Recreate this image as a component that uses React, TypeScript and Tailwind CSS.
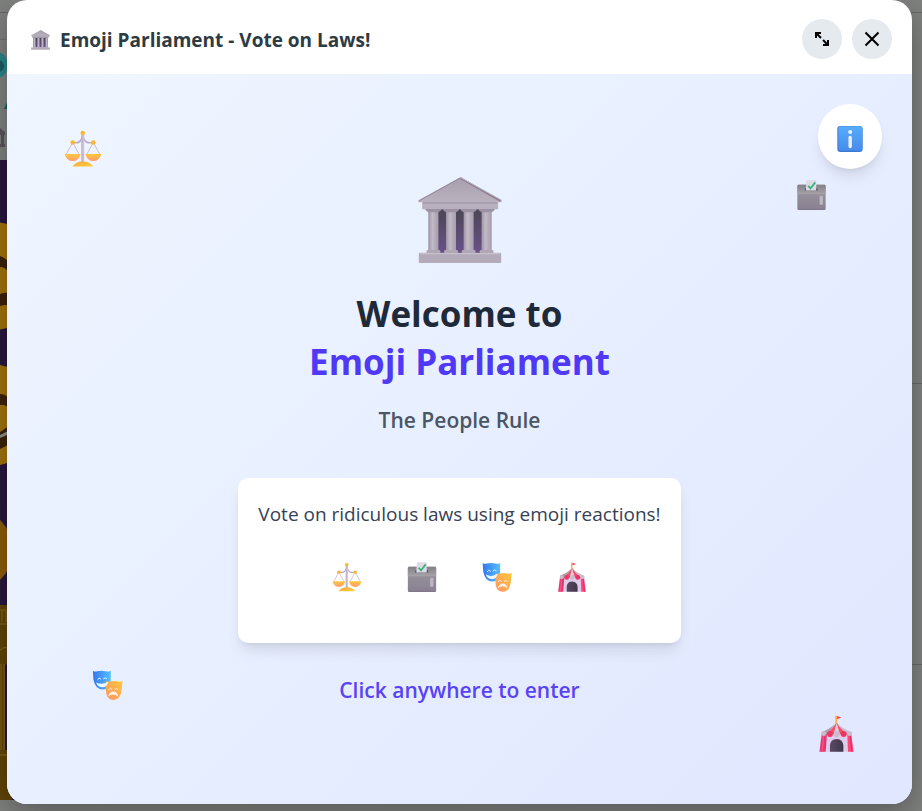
import React from "react";

type IconProps = { className: string };

function Gradients() {
  return (
    <svg className="absolute h-0 w-0" aria-hidden="true">
      <defs>
        <linearGradient id="stone" x1="0" y1="0" x2="0" y2="1">
          <stop offset="0" stopColor="#a79fac" />
          <stop offset="1" stopColor="#b9b1bd" />
        </linearGradient>
        <linearGradient id="column" x1="0" y1="0" x2="1" y2="0">
          <stop offset="0" stopColor="#9f95a6" />
          <stop offset="0.4" stopColor="#c2bac7" />
          <stop offset="1" stopColor="#a79dad" />
        </linearGradient>
        <linearGradient id="hall" x1="0" y1="0" x2="0" y2="1">
          <stop offset="0" stopColor="#4b4653" />
          <stop offset="1" stopColor="#68518a" />
        </linearGradient>
        <linearGradient id="pan" x1="0" y1="0" x2="0" y2="1">
          <stop offset="0" stopColor="#ffc83a" />
          <stop offset="1" stopColor="#ff9a72" />
        </linearGradient>
        <linearGradient id="gold" x1="0" y1="0" x2="1" y2="1">
          <stop offset="0" stopColor="#f5a53c" />
          <stop offset="1" stopColor="#ffd03a" />
        </linearGradient>
        <linearGradient id="boxFront" x1="0" y1="0" x2="0" y2="1">
          <stop offset="0" stopColor="#9b989f" />
          <stop offset="1" stopColor="#898091" />
        </linearGradient>
        <linearGradient id="boxTop" x1="0" y1="0" x2="0" y2="1">
          <stop offset="0" stopColor="#828086" />
          <stop offset="1" stopColor="#a3a1a5" />
        </linearGradient>
        <linearGradient id="happy" x1="0" y1="0" x2="1" y2="0">
          <stop offset="0" stopColor="#3577ee" />
          <stop offset="1" stopColor="#55c0ff" />
        </linearGradient>
        <linearGradient id="sad" x1="0" y1="1" x2="1" y2="0">
          <stop offset="0" stopColor="#ff9463" />
          <stop offset="1" stopColor="#ffc63a" />
        </linearGradient>
        <linearGradient id="door" x1="0" y1="0" x2="1" y2="0">
          <stop offset="0" stopColor="#594a67" />
          <stop offset="1" stopColor="#403749" />
        </linearGradient>
        <linearGradient id="info" x1="0" y1="0" x2="0" y2="1">
          <stop offset="0" stopColor="#57acfa" />
          <stop offset="1" stopColor="#468cec" />
        </linearGradient>
      </defs>
    </svg>
  );
}

function Parliament({ className }: IconProps) {
  return (
    <svg className={className} viewBox="52 36 252 259" aria-hidden="true">
      <rect x="84" y="130" width="188" height="136" fill="url(#hall)" />
      <path d="M180 37 L303 106 V112 H53 V106 Z" fill="url(#stone)" />
      <path d="M180 40 L300 108" stroke="#8b7c91" strokeWidth="5" />
      <path d="M178 37 L303 106" stroke="#b9b1bd" strokeWidth="3" />
      <path d="M178 39 L54 108" stroke="#928898" strokeWidth="3" />
      <rect x="64" y="112" width="229" height="21" rx="2" fill="#b9b0bf" />
      <path d="M66 114 H291" stroke="#988e9f" strokeWidth="3" />
      {[98, 151, 204, 258].map((x) => (
        <g key={x}>
          <rect x={x - 15} y="136" width="30" height="125" fill="url(#column)" />
          <path d={`M${x - 25} 132 H${x + 25} Q${x + 23} 140 ${x + 14} 142 H${x - 14} Q${x - 23} 140 ${x - 25} 132`} fill="#9c92a3" />
          <rect x={x - 21} y="256" width="42" height="10" rx="4" fill="#b0a7b6" />
        </g>
      ))}
      <rect x="54" y="264" width="248" height="31" rx="3" fill="#b3abb9" />
      <path d="M58 267 H300" stroke="#c7c0cb" strokeWidth="4" />
    </svg>
  );
}

function Scales({ className }: IconProps) {
  return (
    <svg className={className} viewBox="40 28 118 114" aria-hidden="true">
      <g fill="none" stroke="#c9b8d0" strokeWidth="3">
        <path d="M67 66 L47 103 M67 66 L87 103 M131 66 L111 103 M131 66 L151 103" />
        <path d="M67 67 H78 Q93 67 98 46 Q104 67 119 67 H131" stroke="#bcaac5" strokeWidth="5" />
        <path d="M98 42 V130" stroke="#c4b4cc" strokeWidth="9" />
        <path d="M101 46 V128" stroke="#dccfe1" strokeWidth="2" />
      </g>
      <path d="M42 102 H92 Q86 124 67 124 Q48 124 42 102 M106 102 H156 Q150 124 131 124 Q112 124 106 102" fill="url(#pan)" />
      <path d="M66 141 Q76 125 98 125 Q121 125 131 141 Z" fill="url(#gold)" />
      <g fill="#fcb62f">
        <circle cx="98" cy="37" r="7" />
        <circle cx="67" cy="66" r="7" />
        <circle cx="131" cy="66" r="7" />
      </g>
    </svg>
  );
}

function BallotBox({ className }: IconProps) {
  return (
    <svg className={className} viewBox="50 542 86 89" aria-hidden="true">
      <rect x="51" y="556" width="84" height="75" rx="4" fill="url(#boxFront)" />
      <path d="M55 556 H131 Q135 556 135 560 V583 H51 V560 Q51 556 55 556" fill="url(#boxTop)" />
      <path d="M51 583 H135" stroke="#aaa6ad" strokeWidth="2" />
      <path d="M75 566 H109 L112 573 H72 Z" fill="#504658" />
      <path d="M78 543 H107 V573 H76 Z" fill="#ded8e7" />
      <path d="M83 559 L90 567 L104 549" fill="none" stroke="#2db578" strokeWidth="5" />
      <rect x="117" y="589" width="10" height="27" rx="4" fill="#bbb6c1" />
      <path d="M53 629 H133" stroke="#7d7089" strokeWidth="2" />
    </svg>
  );
}

function Masks({ className }: IconProps) {
  return (
    <svg className={className} viewBox="754 290 94 92" aria-hidden="true">
      <path d="M756 292 Q762 296 769 294 Q782 290 796 294 Q804 296 811 292 V315 Q811 350 787 350 Q764 350 758 320 Z" fill="url(#happy)" />
      <path d="M796 324 Q803 328 811 325 Q823 322 834 325 Q841 327 847 323 L844 354 Q840 382 818 382 Q796 382 796 350 Z" fill="url(#sad)" />
      <path d="M766 328 Q784 338 803 326 Q800 343 785 343 Q771 342 766 328" fill="#f1f7ff" />
      <g fill="none" stroke="#eaf4ff" strokeWidth="3">
        <path d="M770 320 Q775 311 781 318 M788 318 Q794 310 799 317" />
        <path d="M804 351 Q810 342 815 350 M823 350 Q829 343 834 351" />
      </g>
      <path d="M803 371 Q807 356 820 356 Q832 357 834 372 Q819 359 803 371" fill="#fff1e6" />
    </svg>
  );
}

function Tent({ className }: IconProps) {
  return (
    <svg className={className} viewBox="56 44 106 113" aria-hidden="true">
      <path d="M64 101 L57 156 H161 L154 101 Z" fill="#dfcceb" />
      <path d="M64 101 H80 L76 156 H57 Z" fill="#df3970" />
      <path d="M142 101 H154 L161 156 H144 Z" fill="#ff4678" />
      <path d="M70 102 L65 156" stroke="#ff4c83" strokeWidth="5" />
      <path d="M151 103 L156 156" stroke="#e0265d" strokeWidth="3" />
      <path d="M109 65 Q99 82 64 96 V102 H155 V96 Q120 82 109 65" fill="#c9bfd0" />
      <path d="M109 67 Q100 85 80 99 L79 103 H101 L109 67 M109 67 L119 103 H143 Q121 88 109 67" fill="#fb4b66" />
      <path d="M64 96 Q88 88 106 71 L79 103 H64 Z" fill="#aaa0ad" />
      <path d="M101 101 L109 70 L119 101 Z" fill="#dacddd" />
      <g fill="#c9bdcd">
        <circle cx="70" cy="101" r="7" />
        <circle cx="110" cy="102" r="9" />
        <circle cx="149" cy="101" r="7" />
      </g>
      <g fill="#ed3563">
        <circle cx="89" cy="102" r="9" />
        <circle cx="131" cy="102" r="9" />
      </g>
      <path d="M89 156 V136 Q91 117 110 117 Q128 118 130 137 V156 Z" fill="url(#door)" />
      <path d="M108 46 V71" stroke="#ffac35" strokeWidth="5" />
      <path d="M111 47 L124 52 L111 57 Z" fill="#ff386c" />
    </svg>
  );
}

function InfoIcon({ className }: IconProps) {
  return (
    <svg className={className} viewBox="0 0 75 77" aria-hidden="true">
      <rect width="75" height="77" rx="9" fill="#3c78cd" />
      <rect x="3" y="1" width="71" height="72" rx="8" fill="url(#info)" />
      <circle cx="38" cy="18" r="6" fill="#f1eefc" />
      <rect x="33" y="29" width="10" height="37" rx="5" fill="#f1eefc" />
    </svg>
  );
}

function PageBehind() {
  return (
    <div className="absolute inset-0 overflow-hidden bg-[#7f817f]" aria-hidden="true">
      <div className="absolute inset-x-0 top-3 h-px bg-[#666866]" />
      <div className="absolute right-0 top-[383px] h-px w-5 bg-[#666866]" />
      <div className="absolute right-0 top-[664px] h-px w-5 bg-[#666866]" />
      <svg className="absolute left-0 top-0" width="30" height="811" viewBox="0 0 30 811">
        <path d="M0 39.5 H30" stroke="#717371" />
        <circle cx="-6" cy="65" r="14" fill="#2a8588" />
        <circle cx="-2" cy="66" r="6" fill="#1c5a60" />
        <path d="M4 109 L8 100 V109 Z" fill="#0f6652" />
        <path d="M0 128 L5 132 V135 H0 M1 135 H4 V145 H1 M0 144 H5 V147 H0" fill="#59545e" />
        <rect y="160" width="30" height="640" fill="#28173f" />
        <circle cx="-8" cy="276" r="54" fill="#a1730d" />
        <path d="M0 256 Q7 258 12 267 V276 Q5 266 0 267 M0 294 Q7 291 12 295 V306 Q5 304 0 306" fill="#3b220b" />
        <circle cx="-10" cy="415" r="51" fill="#a1730d" />
        <path d="M0 394 Q8 394 12 403 V410 Q5 404 0 405 M0 432 L12 424 V443 L0 449" fill="#3b220b" />
        <path d="M0 435 L12 429 V433 L0 438" fill="#8f8c83" />
        <circle cx="-28" cy="550" r="41" fill="#8b5d09" />
        <path d="M0 605 H12 V659 L5 665 V750 H12 V800 H0" fill="#604409" />
        <path d="M0 610 H12 M0 624 H12 M0 650 Q6 644 12 652 M0 755 H12 M2 611 V622 M6 611 V622 M1 664 V750 M4 664 V750" stroke="#8b681c" fill="none" />
      </svg>
    </div>
  );
}

const reactions = [
  { label: "Justice", Icon: Scales },
  { label: "Ballot", Icon: BallotBox },
  { label: "Drama", Icon: Masks },
  { label: "Circus", Icon: Tent },
];

export default function App() {
  return (
    <div className="relative flex min-h-screen flex-col pb-[7px] pl-[7px] pr-[10px] font-['Open_Sans','Noto_Sans',sans-serif]">
      <Gradients />
      <PageBehind />
      <main className="relative flex grow flex-col overflow-hidden rounded-[20px] bg-white shadow-[0_10px_30px_rgba(0,0,0,0.3)]">
        <header className="flex items-center justify-between pb-[15px] pl-6 pr-5 pt-[19px]">
          <div className="flex items-center gap-[10px] pt-[2px]">
            <Parliament className="h-5 w-[19px]" />
            <h2 className="text-[19px] font-bold leading-7 text-[#2d3b42]">Emoji Parliament - Vote on Laws!</h2>
          </div>
          <div className="flex gap-[10px]">
            <button type="button" aria-label="Expand" className="flex size-10 items-center justify-center rounded-full bg-[#e5eaee]">
              <svg className="size-4" viewBox="0 0 16 16" fill="none" stroke="#000" strokeWidth="2">
                <path d="M2 7 V2 H7 M2 2 L7 7 M14 9 V14 H9 M14 14 L9 9" />
              </svg>
            </button>
            <button type="button" aria-label="Close" className="flex size-10 items-center justify-center rounded-full bg-[#e5eaee]">
              <svg className="size-4" viewBox="0 0 16 16" fill="none" stroke="#000" strokeWidth="2">
                <path d="M1.5 1.5 L14.5 14.5 M14.5 1.5 L1.5 14.5" />
              </svg>
            </button>
          </div>
        </header>

        <section className="relative flex grow flex-col items-center justify-center bg-linear-135 from-[#eff6ff] to-[#e0e7ff] text-center">
          <Scales className="absolute left-[57px] top-14 h-[37px] w-[38px]" />
          <BallotBox className="absolute right-[86px] top-[106px] h-[30px] w-[29px]" />
          <Masks className="absolute bottom-[104px] left-[85px] h-[30px] w-[31px]" />
          <Tent className="absolute bottom-[52px] right-[58px] h-[37px] w-[35px]" />
          <button type="button" aria-label="Information" className="absolute right-[30px] top-[30px] flex h-[65px] w-16 items-center justify-center rounded-full bg-white shadow-lg">
            <InfoIcon className="mt-1 size-[26px]" />
          </button>

          <div className="flex h-24 items-center">
            <Parliament className="h-[86px] w-[84px]" />
          </div>
          <h1 className="mt-[22px] text-[35px] font-bold leading-[48px] text-[#1e2939]">
            Welcome to
            <span className="block text-[#4f39f6]">Emoji Parliament</span>
          </h1>
          <p className="mt-[18px] text-[21px] font-semibold leading-8 text-[#4a5565]">The People Rule</p>
          <div className="mt-[42px] rounded-[10px] bg-white px-5 pb-[46px] pt-5 shadow-[0_10px_15px_-3px_rgba(0,0,0,0.1),0_4px_6px_-4px_rgba(0,0,0,0.1)]">
            <p className="text-[19px] leading-8 text-[#364153]">Vote on ridiculous laws using emoji reactions!</p>
            <ul className="mt-[27px] flex h-10 items-center justify-center gap-[45px]">
              {reactions.map(({ label, Icon }) => (
                <li key={label} aria-label={label}>
                  <Icon className="size-[30px]" />
                </li>
              ))}
            </ul>
          </div>
          <button type="button" className="mt-[31px] text-[21px] font-semibold leading-8 text-[#5843f6]">Click anywhere to enter</button>
        </section>
      </main>
    </div>
  );
}
